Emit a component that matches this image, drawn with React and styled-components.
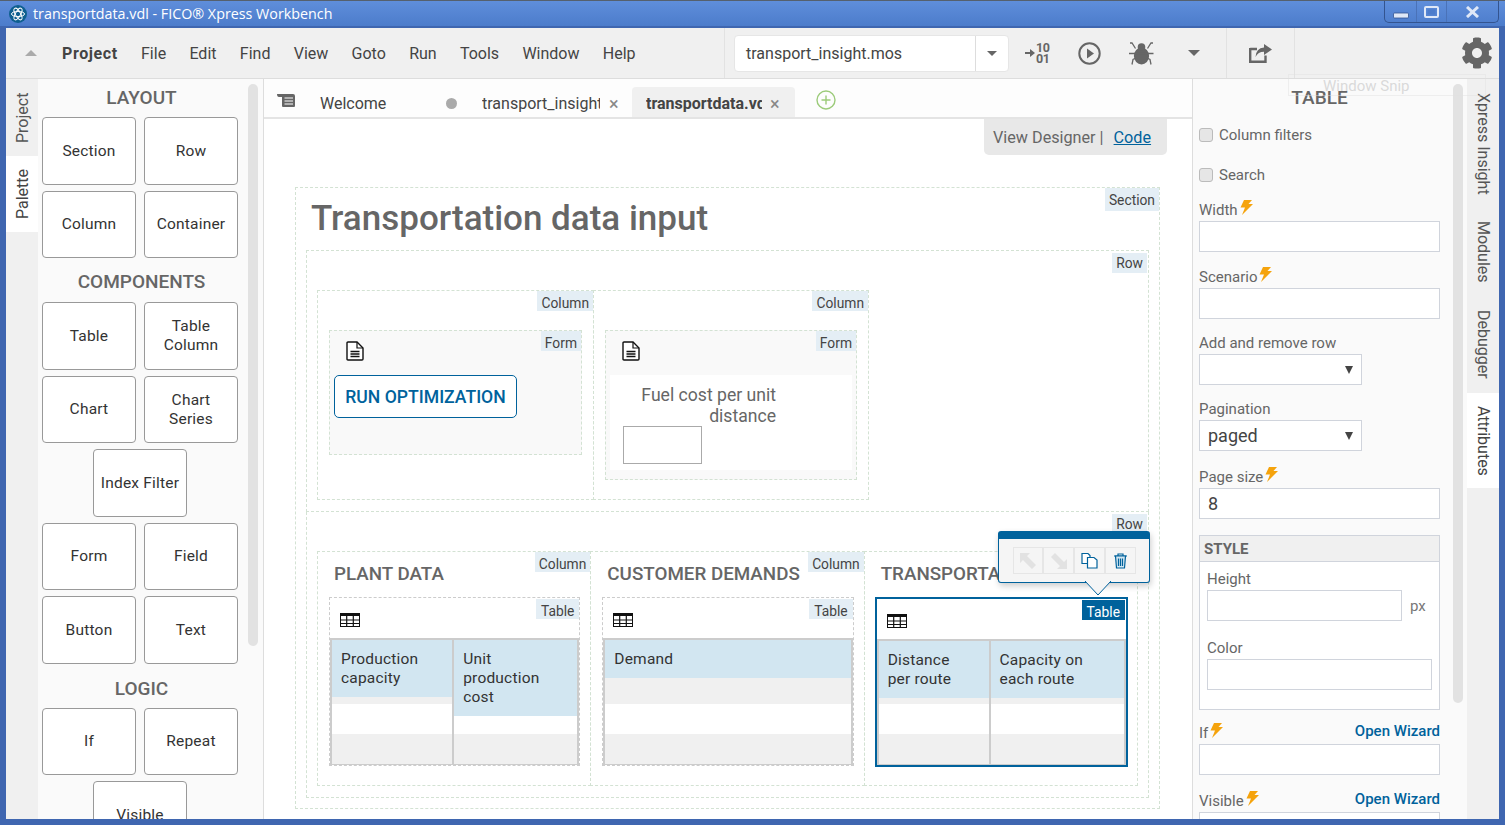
import React from "react";
import styled, { createGlobalStyle } from "styled-components";
import { FaCog } from "react-icons/fa";

const BLUE = "#00629c";
const BADGE = "#e4eef5";
const DASH = "#d3e2d3";

const GlobalStyle = createGlobalStyle`
  html, body { margin: 0; padding: 0; overflow: hidden; }
  body { font-family: Roboto, "Liberation Sans", sans-serif; color: #333; }
  * { box-sizing: border-box; }
`;

const Window = styled.div`
  width: 1505px;
  height: 825px;
  display: flex;
  flex-direction: column;
  position: relative;
  overflow: hidden;
  background: #3f66b0;
  padding: 0 6px 6px;
  border-top: 1px solid #55606e;
`;

const TitleBar = styled.div`
  height: 27px;
  margin: 0 -6px;
  padding: 0 6px 0 9px;
  display: flex;
  align-items: center;
  gap: 6px;
  color: #fff;
  font: 14.3px "Open Sans", sans-serif;
  background: linear-gradient(#5f8edb, #4c7ccb);
  border-bottom: 2px solid #3f66b0;
`;

const WindowButtons = styled.div`
  margin-left: auto;
  align-self: flex-start;
  display: flex;
  height: 22px;
  width: 115px;
  border: 1px solid #33548f;
  border-top: 0;
  border-radius: 0 0 5px 5px;
`;

const WindowButton = styled.div`
  width: ${(p) => p.$w}px;
  display: flex;
  align-items: center;
  justify-content: center;
  border-right: ${(p) => (p.$last ? "0" : "1px solid #4a72b8")};
`;

const Toolbar = styled.div`
  height: 51px;
  flex: none;
  display: flex;
  align-items: center;
  background: #f0f0f0;
  border-bottom: 1px solid #ddd;
`;

const ToolbarLeft = styled.div`
  width: 719px;
  height: 100%;
  padding-left: 19px;
  display: flex;
  align-items: center;
  border-right: 1px solid #e2e2e2;
`;

const Caret = styled.span`
  width: 0;
  height: 0;
  flex: none;
  margin-left: ${(p) => p.$ml || 0}px;
  border-left: ${(p) => p.$size || 6}px solid transparent;
  border-right: ${(p) => p.$size || 6}px solid transparent;
  border-top: ${(p) => (p.$up ? "0" : `${p.$depth || p.$size || 6}px solid ${p.$color || "#666"}`)};
  border-bottom: ${(p) => (p.$up ? `${p.$size || 6}px solid #aaa` : "0")};
`;

const Menu = styled.nav`
  margin-left: 25px;
  display: flex;
  gap: 23.3px;
  font-size: 16px;
  color: #444;
`;

const MenuItem = styled.span`
  font-weight: ${(p) => (p.$bold ? 700 : 400)};
  letter-spacing: ${(p) => (p.$bold ? "0.6px" : "0")};
`;

const Combo = styled.div`
  margin-left: 9px;
  width: 275px;
  height: 37px;
  flex: none;
  display: flex;
  background: #fff;
  border: 1px solid #e6e6e6;
  border-radius: 4px;
  font-size: 16px;
  color: #444;
`;

const ComboText = styled.div`
  flex: 1;
  display: flex;
  align-items: center;
  padding-left: 11px;
  border-right: 1px solid #ddd;
`;

const ComboArrow = styled.div`
  width: 32px;
  display: flex;
  align-items: center;
  justify-content: center;
`;

const RunIcons = styled.div`
  width: 218px;
  height: 100%;
  padding-left: 16px;
  display: flex;
  align-items: center;
  gap: 28px;
  color: #666;
  border-right: 1px solid #e2e2e2;
`;

const BinaryIcon = styled.div`
  display: flex;
  align-items: center;
  width: 25px;
  gap: 1px;
  color: #666;
`;

const BinaryText = styled.div`
  font: 700 12.5px/11.5px Roboto, sans-serif;
  letter-spacing: -0.4px;
`;

const ShareCell = styled.div`
  width: 68px;
  height: 100%;
  display: flex;
  align-items: center;
  justify-content: center;
  color: #666;
  border-right: 1px solid #e2e2e2;
`;

const GearCell = styled.div`
  flex: 1;
  display: flex;
  justify-content: flex-end;
  padding-right: 6px;
  color: #666;
`;

const Main = styled.div`
  flex: 1;
  min-height: 0;
  display: flex;
  background: #f0f0f0;
`;

const Rail = styled.div`
  width: ${(p) => p.$w}px;
  flex: none;
  display: flex;
  flex-direction: column;
  background: #f0f0f0;
`;

const RailTab = styled.div`
  height: ${(p) => p.$h}px;
  display: flex;
  align-items: center;
  justify-content: center;
  writing-mode: vertical-rl;
  transform: ${(p) => (p.$flip ? "rotate(180deg)" : "none")};
  font-size: 16px;
  color: ${(p) => (p.$active ? "#444" : "#555")};
  background: ${(p) => (p.$active ? "#fff" : "#f0f0f0")};
`;

const Palette = styled.aside`
  width: 226px;
  flex: none;
  position: relative;
  overflow: hidden;
  padding: 0 22px 0 4px;
  background: #fafafa;
  border-right: 1px solid #ddd;
`;

const ScrollThumb = styled.div`
  position: absolute;
  top: 5px;
  right: ${(p) => p.$right}px;
  width: 10px;
  height: ${(p) => p.$h}px;
  border-radius: 5px;
  background: #e2e2e2;
`;

const PaletteHeading = styled.h3`
  margin: ${(p) => p.$top}px 0 ${(p) => p.$bottom}px;
  font: 500 19px/24px Roboto, sans-serif;
  text-align: center;
  color: #666;
`;

const PaletteGrid = styled.div`
  display: flex;
  flex-wrap: wrap;
  justify-content: center;
  gap: 6px 8px;
  width: 196px;
`;

const PaletteButton = styled.div`
  width: 94px;
  height: 67.5px;
  flex: none;
  margin: ${(p) => (p.$solo ? "0 51px" : "0")};
  display: flex;
  align-items: center;
  justify-content: center;
  text-align: center;
  padding: 1px 6px 0;
  border: 1px solid #999;
  border-radius: 4px;
  background: #fff;
  font-size: 15.5px;
  line-height: 19px;
  letter-spacing: 0.2px;
  color: #333;
`;

const Center = styled.main`
  flex: 1;
  min-width: 0;
  display: flex;
  flex-direction: column;
  background: #fff;
  overflow: hidden;
`;

const TabBar = styled.div`
  height: 40px;
  flex: none;
  display: flex;
  align-items: flex-end;
  background: #fdfdfd;
  border-bottom: 2px solid #e4e4e4;
  font-size: 16px;
  color: #444;
`;

const TabMenuIcon = styled.div`
  width: 56px;
  height: 100%;
  padding: 14px 0 0 12px;
`;

const Tab = styled.div`
  width: ${(p) => p.$w}px;
  height: 30px;
  flex: none;
  display: flex;
  align-items: center;
  padding-top: 2px;
  padding-left: ${(p) => p.$pad || 0}px;
  font-weight: ${(p) => (p.$active ? 700 : 400)};
  background: ${(p) => (p.$active ? "#f0f0f0" : "transparent")};
  border-radius: 4px 4px 0 0;
`;

const TabLabel = styled.span`
  width: ${(p) => p.$w}px;
  overflow: hidden;
  white-space: nowrap;
`;

const TabClose = styled.span`
  margin-left: ${(p) => p.$ml}px;
  font-size: 18px;
  font-weight: 400;
  color: #888;
`;

const TabDot = styled.span`
  width: 11px;
  height: 11px;
  margin-right: 25px;
  border-radius: 50%;
  background: #aaa;
`;

const AddTab = styled.div`
  align-self: flex-start;
  margin: 11px 0 0 21px;
`;

const Canvas = styled.div`
  flex: 1;
  min-height: 0;
  display: flex;
  flex-direction: column;
  padding: 0 32px 0 31px;
`;

const ViewSwitch = styled.div`
  align-self: flex-end;
  width: 183px;
  height: 36px;
  margin: 0 -7px 32px 0;
  padding-left: 9px;
  display: flex;
  align-items: center;
  gap: 10px;
  background: #e8e8e8;
  border-radius: 0 0 5px 5px;
  font-size: 16.2px;
  color: #666;
`;

const CodeLink = styled.span`
  color: ${BLUE};
  text-decoration: underline;
`;

const Section = styled.section`
  position: relative;
  height: 622px;
  flex: none;
  padding: 0 10px;
  border: 1px dashed ${DASH};
`;

const PageTitle = styled.h1`
  margin: 0;
  height: 62px;
  padding: 11px 0 0 5px;
  font: 500 35px/40px Roboto, sans-serif;
  color: #666;
`;

const Badge = styled.div`
  position: absolute;
  top: ${(p) => p.$top ?? 0}px;
  right: ${(p) => p.$right ?? 0}px;
  height: ${(p) => p.$h || 20}px;
  padding: ${(p) => p.$nudge || 0}px ${(p) => p.$pad ?? 4}px 0;
  display: flex;
  align-items: center;
  font-size: 13.8px;
  color: ${(p) => (p.$selected ? "#fff" : "#444")};
  background: ${(p) => (p.$selected ? BLUE : BADGE)};
  z-index: 1;
`;

const LayoutRow = styled.div`
  position: relative;
  height: ${(p) => p.$h}px;
  padding: 39px 10px 0 11px;
  display: flex;
  align-items: flex-start;
  border: 1px dashed ${DASH};
  border-top-width: ${(p) => (p.$first ? 1 : 0)}px;
`;

const Column = styled.div`
  position: relative;
  width: ${(p) => (p.$w ? `${p.$w}px` : "auto")};
  flex: ${(p) => (p.$w ? "none" : "1")};
  height: ${(p) => p.$h}px;
  padding: ${(p) => (p.$wide ? "0 10px 0 11px" : "39px 11px 0")};
  border: 1px dashed ${DASH};
  margin-left: -1px;
`;

const ColumnHeading = styled.h2`
  margin: 0;
  height: 45px;
  padding: 10px 0 0 5px;
  font: 500 18.8px/24px Roboto, sans-serif;
  white-space: nowrap;
  color: #666;
`;

const Form = styled.div`
  position: relative;
  height: ${(p) => p.$h}px;
  padding: 44px 4px 0;
  background: #f9f9f9;
  border: 1px dashed ${DASH};
`;

const FormIcon = styled.div`
  position: absolute;
  top: 10px;
  left: 16px;
`;

const RunButton = styled.div`
  width: 183px;
  height: 43px;
  display: flex;
  align-items: center;
  justify-content: center;
  background: #fff;
  border: 1px solid ${BLUE};
  border-radius: 5px;
  font-size: 17.6px;
  font-weight: 500;
  color: ${BLUE};
`;

const FormBody = styled.div`
  height: 95px;
  padding: 10px 0 0 13px;
  background: #fff;
`;

const FuelLabel = styled.div`
  width: 153px;
  text-align: right;
  font-size: 17.6px;
  line-height: 21px;
  color: #666;
`;

const FuelInput = styled.div`
  width: 79px;
  height: 38px;
  margin-top: -1px;
  border: 1px solid #aaa;
`;

const TableWrap = styled.div`
  position: relative;
  height: ${(p) => (p.$selected ? 170 : 169)}px;
  margin: ${(p) => (p.$selected ? "0 -1px" : "0")};
  display: flex;
  flex-direction: column;
  border: ${(p) => (p.$selected ? `2px solid ${BLUE}` : "1px dashed #ccc")};
  background: #fff;
`;

const TableTools = styled.div`
  height: 40px;
  flex: none;
  padding: 14px 0 0 10px;
`;

const Grid = styled.div`
  flex: 1;
  display: flex;
  border: 2px solid #ccc;
  border-bottom-width: 1px;
  min-height: 0;
`;

const GridColumn = styled.div`
  flex: ${(p) => p.$grow};
  min-width: 0;
  display: flex;
  flex-direction: column;
  border-left: ${(p) => (p.$divider ? "2px solid #ccc" : "0")};
`;

const GridHeader = styled.div`
  padding: 10px 9px 9px;
  background: #d2e6f1;
  font-size: 15.5px;
  line-height: 19px;
  letter-spacing: 0.2px;
  color: #333;
`;

const GridBody = styled.div`
  flex: 1;
  background: linear-gradient(to top, #f0f0f0 0 30px, #fff 30px 60px, #f0f0f0 60px);
`;

const Popover = styled.div`
  position: absolute;
  left: 121px;
  top: -68px;
  width: 152px;
  height: 52px;
  padding: 8px 13px 0 14px;
  display: flex;
  background: #f5f5f5;
  border: 1px solid ${BLUE};
  border-top-width: 8px;
  border-radius: 3px;
  box-shadow: 1px 3px 6px rgba(0, 0, 0, 0.2);
  z-index: 3;
`;

const PopoverArrow = styled.svg`
  position: absolute;
  left: 85px;
  top: 42px;
`;

const PopoverButton = styled.div`
  width: 31px;
  height: 27px;
  display: flex;
  align-items: center;
  justify-content: center;
  border: 1px solid #e6e6e6;
`;

const Props = styled.aside`
  width: 275px;
  flex: none;
  position: relative;
  overflow: hidden;
  padding: 0 27px 0 6px;
  background: #fafafa;
  border-left: 1px solid #ddd;
`;

const PropsHeading = styled.h3`
  margin: 7px 0 16px;
  font: 500 19px/24px Roboto, sans-serif;
  text-align: center;
  color: #666;
`;

const CheckRow = styled.label`
  height: ${(p) => p.$h}px;
  display: flex;
  align-items: flex-start;
  gap: 6px;
  font-size: 15px;
  line-height: 18px;
  color: #666;
`;

const CheckBox = styled.span`
  width: 14px;
  height: 14px;
  margin-top: 2px;
  background: #e6e6e6;
  border: 1px solid #bbb;
  border-radius: 3px;
`;

const Field = styled.div`
  margin-bottom: ${(p) => p.$mb ?? 14}px;
`;

const FieldLabel = styled.div`
  height: 22px;
  display: flex;
  align-items: center;
  justify-content: space-between;
  font-size: 15px;
  color: #666;
`;

const LabelLeft = styled.span`
  display: flex;
  align-items: center;
`;

const BoltSvg = styled.svg`
  margin: -5px 0 0 1px;
`;

const WizardLink = styled.span`
  margin-bottom: 5px;
  font-weight: 500;
  font-size: 15px;
  color: ${BLUE};
`;

const Input = styled.div`
  width: ${(p) => p.$w || "100%"};
  height: 31px;
  display: flex;
  align-items: center;
  justify-content: space-between;
  padding: 0 8px;
  background: #fff;
  border: 1px solid #d0d4dc;
  font-size: 18px;
  color: #444;
`;

const StyleBox = styled.div`
  height: 175px;
  margin: 16px 0 12px;
  background: #fff;
  border: 1px solid #d0d4dc;
`;

const StyleHeader = styled.div`
  height: 26px;
  padding-left: 4px;
  display: flex;
  align-items: center;
  font-size: 15px;
  font-weight: 700;
  color: #666;
  background: #f0f0f0;
  border-bottom: 1px solid #d0d4dc;
`;

const StyleBody = styled.div`
  padding: 6px 7px 0;
`;

const UnitRow = styled.div`
  display: flex;
  align-items: center;
  gap: 8px;
  font-size: 15px;
  color: #777;
`;

const WindowSnip = styled.div`
  position: absolute;
  left: 1288px;
  top: 73px;
  width: 198px;
  height: 22px;
  padding-left: 34px;
  border: 1px solid rgba(225, 225, 225, 0.45);
  font-size: 15px;
  line-height: 22px;
  color: rgba(195, 195, 195, 0.6);
  z-index: 4;
`;

const LogoIcon = () => (
  <svg width="18" height="18" viewBox="0 0 18 18">
    <circle cx="9" cy="9" r="9" fill="#0e5f8f" />
    <g fill="none" stroke="#fff" strokeWidth="1">
      <ellipse cx="9" cy="9" rx="6.5" ry="2.6" />
      <ellipse cx="9" cy="9" rx="6.5" ry="2.6" transform="rotate(60 9 9)" />
      <ellipse cx="9" cy="9" rx="6.5" ry="2.6" transform="rotate(120 9 9)" />
    </g>
  </svg>
);

const MinimizeIcon = () => (
  <svg width="16" height="14" viewBox="0 0 16 14">
    <rect x="0.5" y="8" width="15" height="5" rx="1" fill="#dfe8f7" stroke="#33548f" strokeWidth="0.8" />
  </svg>
);

const RestoreIcon = () => (
  <svg width="15" height="12" viewBox="0 0 15 12">
    <rect x="1" y="1" width="13" height="10" rx="1" fill="none" stroke="#dfe8f7" strokeWidth="2" />
    <rect x="3.5" y="3.5" width="8" height="5" fill="#4c7ccb" />
  </svg>
);

const CloseIcon = () => (
  <svg width="15" height="12" viewBox="0 0 15 12">
    <path d="M2 1 L13 11 M13 1 L2 11" stroke="#dfe8f7" strokeWidth="3" />
  </svg>
);

const PlayIcon = () => (
  <svg width="23" height="23" viewBox="0 0 23 23">
    <circle cx="11.5" cy="11.5" r="10.2" fill="none" stroke="#666" strokeWidth="2" />
    <path d="M9 6.5 L16 11.5 L9 16.5 Z" fill="#666" />
  </svg>
);

const BugIcon = () => (
  <svg width="25" height="23" viewBox="0 0 25 23">
    <ellipse cx="12.5" cy="14" rx="7.6" ry="8.5" fill="#666" />
    <circle cx="12.5" cy="5" r="3.8" fill="#666" />
    <path
      d="M1 1 L3 1 L6.5 6.5 M24 1 L22 1 L18.5 6.5 M0 11.5 H24.5 M3 22.5 L4 17.5 L7 16 M22 22.5 L21 17.5 L18 16"
      fill="none"
      stroke="#666"
      strokeWidth="1.3"
    />
  </svg>
);

const ShareIcon = () => (
  <svg width="23" height="19" viewBox="0 0 23 19">
    <path d="M1.2 5 H8 M1.2 4 V17.8 H16.5 V11.5" fill="none" stroke="#666" strokeWidth="2.4" />
    <path d="M15 0 L23 5.5 L15 11 V7.8 Q9 7.8 6.5 13 Q7 4 15 3.4 Z" fill="#666" />
  </svg>
);

const ScrollIcon = () => (
  <svg width="20" height="15" viewBox="0 0 20 15">
    <path d="M1 1 H17 Q19 1 19 3 V13 Q19 14 18 14 H7 Q6 14 6 13 V4 H3 Q1 4 1 1 Z" fill="#666" />
    <path d="M8.5 5 H17 M8.5 8 H17 M8.5 11 H17" stroke="#fff" strokeWidth="1" />
  </svg>
);

const PlusCircle = () => (
  <svg width="20" height="20" viewBox="0 0 20 20">
    <circle cx="10" cy="10" r="9" fill="none" stroke="#9ccb7a" strokeWidth="1.4" />
    <path d="M10 5.5 V14.5 M5.5 10 H14.5" stroke="#9ccb7a" strokeWidth="1.4" />
  </svg>
);

const DocIcon = () => (
  <svg width="18" height="20" viewBox="0 0 18 20">
    <path d="M1 2 Q1 1 2 1 H11 L17 7 V18 Q17 19 16 19 H2 Q1 19 1 18 Z" fill="#fff" stroke="#111" strokeWidth="1.4" />
    <path d="M11 1 V7 H17" fill="none" stroke="#111" strokeWidth="1.2" />
    <path d="M4.5 10.5 H13.5 M4.5 13 H13.5 M4.5 15.5 H13.5" stroke="#111" strokeWidth="1.3" />
  </svg>
);

const TableIcon = () => (
  <svg width="20" height="14" viewBox="0 0 20 14">
    <rect x="0.5" y="0.5" width="19" height="13" fill="#fff" stroke="#111" />
    <rect x="0" y="0" width="20" height="3" fill="#111" />
    <path d="M0 7 H20 M0 10.5 H20 M6.7 0 V14 M13.3 0 V14" stroke="#111" strokeWidth="1.2" />
  </svg>
);

const Bolt = () => (
  <BoltSvg width="14" height="15" viewBox="0 0 14 15">
    <path d="M5 0 H13 L9.5 4 H14 L3 15 L6 7.5 H1.5 Z" fill="#f5a30c" />
  </BoltSvg>
);

const ArrowUpLeft = () => (
  <svg width="18" height="18" viewBox="0 0 18 18">
    <path d="M1 1 H11 L8 4 L17 13 L13 17 L4 8 L1 11 Z" fill="#e2e2e2" />
  </svg>
);

const ArrowDownRight = () => (
  <svg width="18" height="18" viewBox="0 0 18 18">
    <path d="M17 17 H7 L10 14 L1 5 L5 1 L14 10 L17 7 Z" fill="#e2e2e2" />
  </svg>
);

const CopyIcon = () => (
  <svg width="17" height="17" viewBox="0 0 17 17" fill="#fff" stroke={BLUE} strokeWidth="1.2">
    <path d="M1 1.5 H7 L9 3.5 V11.5 H1 Z" />
    <path d="M6.5 5.5 H13 L16 8 V16 H6.5 Z" />
  </svg>
);

const TrashIcon = () => (
  <svg width="15" height="16" viewBox="0 0 15 16" fill="none" stroke={BLUE} strokeWidth="1.2">
    <path d="M1 3 H14 M5 3 V1 H10 V3" />
    <path d="M2.5 3 L3.5 15 H11.5 L12.5 3 Z" fill="#d2e6f1" />
    <path d="M5.5 5.5 V13 M7.5 5.5 V13 M9.5 5.5 V13" />
  </svg>
);

const layoutItems = ["Section", "Row", "Column", "Container"];
const componentItems = ["Table", "Table Column", "Chart", "Chart Series", "Index Filter", "Form", "Field", "Button", "Text"];
const logicItems = ["If", "Repeat", "Visible"];
const menuItems = ["File", "Edit", "Find", "View", "Goto", "Run", "Tools", "Window", "Help"];
const soloItems = ["Index Filter", "Visible"];

const DataTable = ({ selected, columns, grows = [] }) => (
  <TableWrap $selected={selected}>
    <Badge $selected={selected} $top={1} $right={selected ? 1 : 0} $pad={5} $nudge={3}>Table</Badge>
    <TableTools><TableIcon /></TableTools>
    <Grid>
      {columns.map((col, i) => (
        <GridColumn key={col} $divider={i > 0} $grow={grows[i] || 1}>
          <GridHeader>
            {col.split("|").map((line) => (
              <div key={line}>{line}</div>
            ))}
          </GridHeader>
          <GridBody />
        </GridColumn>
      ))}
    </Grid>
    {selected && (
      <Popover>
        <PopoverButton><ArrowUpLeft /></PopoverButton>
        <PopoverButton><ArrowDownRight /></PopoverButton>
        <PopoverButton><CopyIcon /></PopoverButton>
        <PopoverButton><TrashIcon /></PopoverButton>
        <PopoverArrow width="28" height="16" viewBox="0 0 28 16">
          <path d="M1 0 L14 14 L27 0" fill="#f5f5f5" stroke={BLUE} strokeWidth="1" />
        </PopoverArrow>
      </Popover>
    )}
  </TableWrap>
);

const Label = ({ text, bolt, wizard }) => (
  <FieldLabel>
    <LabelLeft>
      {text}
      {bolt && <Bolt />}
    </LabelLeft>
    {wizard && <WizardLink>Open Wizard</WizardLink>}
  </FieldLabel>
);

const PaletteItems = ({ items }) => (
  <PaletteGrid>
    {items.map((item) => (
      <PaletteButton key={item} $solo={soloItems.includes(item)}>{item}</PaletteButton>
    ))}
  </PaletteGrid>
);

const App = () => (
  <Window>
    <GlobalStyle />
    <TitleBar>
      <LogoIcon />
      <span>transportdata.vdl - FICO® Xpress Workbench</span>
      <WindowButtons>
        <WindowButton $w={32}><MinimizeIcon /></WindowButton>
        <WindowButton $w={30}><RestoreIcon /></WindowButton>
        <WindowButton $w={51} $last><CloseIcon /></WindowButton>
      </WindowButtons>
    </TitleBar>

    <Toolbar>
      <ToolbarLeft>
        <Caret $up />
        <Menu>
          <MenuItem $bold>Project</MenuItem>
          {menuItems.map((item) => (
            <MenuItem key={item}>{item}</MenuItem>
          ))}
        </Menu>
      </ToolbarLeft>
      <Combo>
        <ComboText>transport_insight.mos</ComboText>
        <ComboArrow><Caret $size={5} /></ComboArrow>
      </Combo>
      <RunIcons>
        <BinaryIcon>
          <svg width="10" height="10" viewBox="0 0 10 10">
            <path d="M0 4 H5 V1 L10 5 L5 9 V6 H0 Z" fill="#666" />
          </svg>
          <BinaryText>10<br />01</BinaryText>
        </BinaryIcon>
        <PlayIcon />
        <BugIcon />
        <Caret $size={6} $ml={6} />
      </RunIcons>
      <ShareCell><ShareIcon /></ShareCell>
      <GearCell><FaCog size={32} /></GearCell>
    </Toolbar>

    <Main>
      <Rail $w={32}>
        <RailTab $h={77} $flip>Project</RailTab>
        <RailTab $h={76} $flip $active>Palette</RailTab>
      </Rail>

      <Palette>
        <PaletteHeading $top={7} $bottom={7}>LAYOUT</PaletteHeading>
        <PaletteItems items={layoutItems} />
        <PaletteHeading $top={12} $bottom={8}>COMPONENTS</PaletteHeading>
        <PaletteItems items={componentItems} />
        <PaletteHeading $top={13} $bottom={7}>LOGIC</PaletteHeading>
        <PaletteItems items={logicItems} />
        <ScrollThumb $right={5} $h={562} />
      </Palette>

      <Center>
        <TabBar>
          <TabMenuIcon><ScrollIcon /></TabMenuIcon>
          <Tab $w={126}>Welcome</Tab>
          <Tab $w={186}>
            <TabDot />
            <TabLabel $w={118}>transport_insight.mos</TabLabel>
            <TabClose $ml={9}>×</TabClose>
          </Tab>
          <Tab $w={163} $pad={14} $active>
            <TabLabel $w={116}>transportdata.vdl</TabLabel>
            <TabClose $ml={8}>×</TabClose>
          </Tab>
          <AddTab><PlusCircle /></AddTab>
        </TabBar>

        <Canvas>
          <ViewSwitch>
            View Designer | <CodeLink>Code</CodeLink>
          </ViewSwitch>
          <Section>
            <Badge $h={23}>Section</Badge>
            <PageTitle>Transportation data input</PageTitle>

            <LayoutRow $first $h={262}>
              <Badge $top={2} $right={1}>Row</Badge>
              <Column $w={277} $h={210}>
                <Badge $nudge={3}>Column</Badge>
                <Form $h={125}>
                  <Badge $nudge={3}>Form</Badge>
                  <FormIcon><DocIcon /></FormIcon>
                  <RunButton>RUN OPTIMIZATION</RunButton>
                </Form>
              </Column>
              <Column $w={276} $h={210}>
                <Badge $nudge={3}>Column</Badge>
                <Form $h={150}>
                  <Badge $nudge={3}>Form</Badge>
                  <FormIcon><DocIcon /></FormIcon>
                  <FormBody>
                    <FuelLabel>Fuel cost per unit distance</FuelLabel>
                    <FuelInput />
                  </FormBody>
                </Form>
              </Column>
            </LayoutRow>

            <LayoutRow $h={286}>
              <Badge $top={2} $right={1}>Row</Badge>
              <Column $wide $h={235}>
                <Badge $nudge={3}>Column</Badge>
                <ColumnHeading>PLANT DATA</ColumnHeading>
                <DataTable columns={["Production|capacity", "Unit|production|cost"]} grows={[122, 125]} />
              </Column>
              <Column $wide $h={235}>
                <Badge $nudge={3}>Column</Badge>
                <ColumnHeading>CUSTOMER DEMANDS</ColumnHeading>
                <DataTable columns={["Demand"]} />
              </Column>
              <Column $wide $h={235}>
                <ColumnHeading>TRANSPORTATION</ColumnHeading>
                <DataTable selected columns={["Distance|per route", "Capacity on|each route"]} grows={[112, 136]} />
              </Column>
            </LayoutRow>
          </Section>
        </Canvas>
      </Center>

      <Props>
        <PropsHeading>TABLE</PropsHeading>
        <CheckRow $h={40}><CheckBox />Column filters</CheckRow>
        <CheckRow $h={33}><CheckBox />Search</CheckRow>
        <Field $mb={14}>
          <Label text="Width" bolt />
          <Input />
        </Field>
        <Field $mb={13}>
          <Label text="Scenario" bolt />
          <Input />
        </Field>
        <Field $mb={13}>
          <Label text="Add and remove row" />
          <Input $w="163px"><span /><Caret $size={4} $depth={8} $color="#444" /></Input>
        </Field>
        <Field $mb={15}>
          <Label text="Pagination" />
          <Input $w="163px">paged<Caret $size={4} $depth={8} $color="#444" /></Input>
        </Field>
        <Field $mb={0}>
          <Label text="Page size" bolt />
          <Input>8</Input>
        </Field>
        <StyleBox>
          <StyleHeader>STYLE</StyleHeader>
          <StyleBody>
            <Field $mb={16}>
              <Label text="Height" />
              <UnitRow><Input $w="195px" />px</UnitRow>
            </Field>
            <Field $mb={0}>
              <Label text="Color" />
              <Input />
            </Field>
          </StyleBody>
        </StyleBox>
        <Field $mb={15}>
          <Label text="If" bolt wizard />
          <Input />
        </Field>
        <Field>
          <Label text="Visible" bolt wizard />
          <Input />
        </Field>
        <ScrollThumb $right={4} $h={619} />
      </Props>

      <Rail $w={32}>
        <RailTab $h={129}>Xpress Insight</RailTab>
        <RailTab $h={87}>Modules</RailTab>
        <RailTab $h={98}>Debugger</RailTab>
        <RailTab $h={95} $active>Attributes</RailTab>
      </Rail>
    </Main>

    <WindowSnip>Window Snip</WindowSnip>
  </Window>
);

export default App;
